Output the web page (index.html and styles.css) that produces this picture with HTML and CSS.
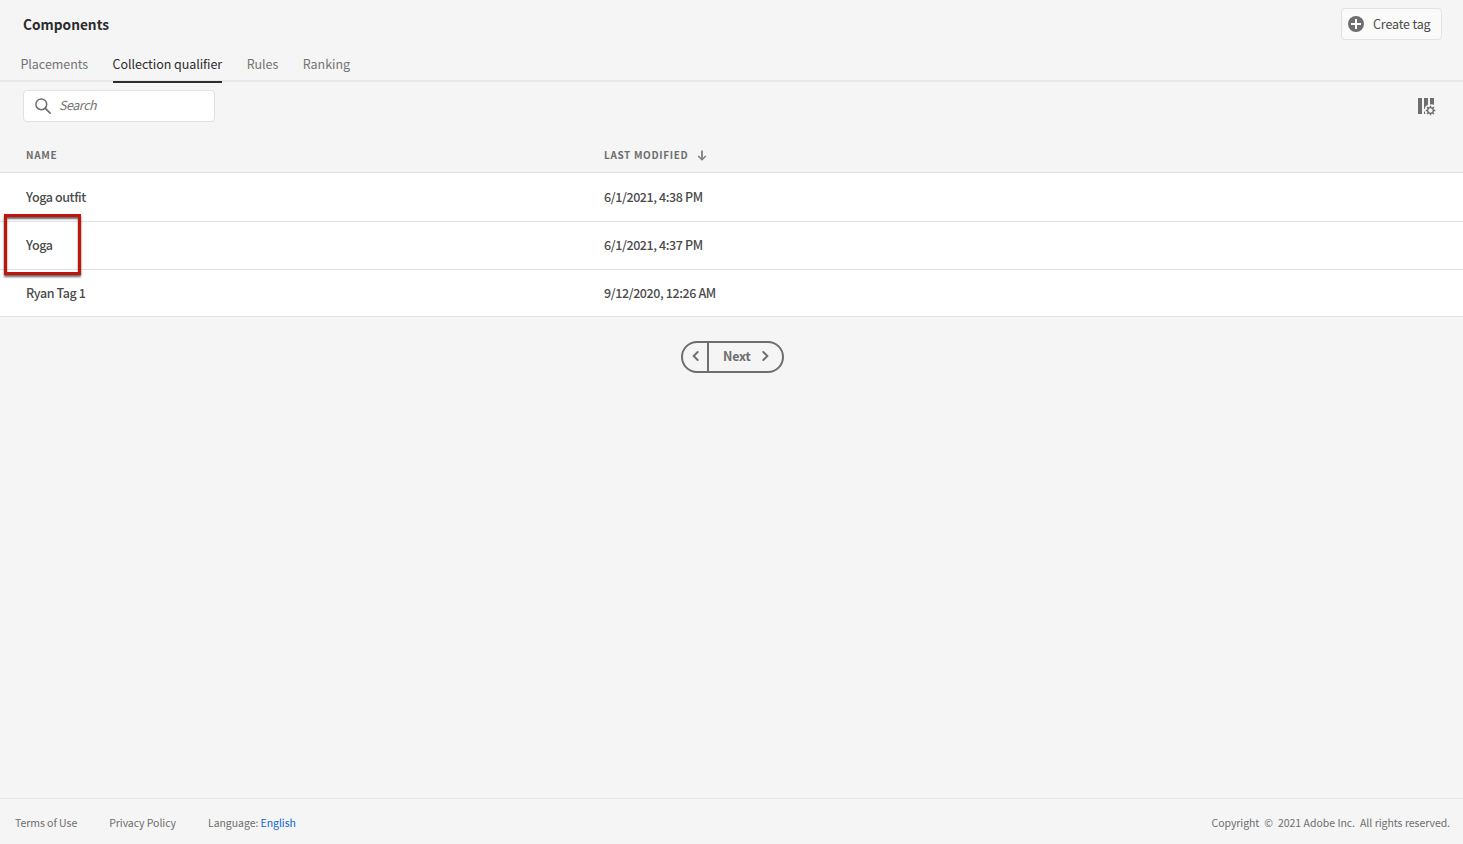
FILE: index.html
```
<!DOCTYPE html>
<html lang="en">
<head>
<meta charset="utf-8">
<title>Components</title>
<link rel="stylesheet" href="styles.css">
</head>
<body>

<header class="header">
	<h1 class="title">Components</h1>
	<button class="create">
		<svg width="16" height="16" viewBox="0 0 16 16"><circle cx="8" cy="8" r="8" fill="#6e6e6e"/><path d="M8 3v10M3 8h10" stroke="#fafafa" stroke-width="2"/></svg>
		<span>Create tag</span>
	</button>
</header>

<nav class="tabs">
	<a class="tab">Placements</a>
	<a class="tab selected">Collection qualifier</a>
	<a class="tab">Rules</a>
	<a class="tab">Ranking</a>
</nav>

<div class="toolbar">
	<div class="search">
		<svg width="16" height="16" viewBox="0 0 16 16" fill="none" stroke="#6e6e6e"><circle cx="6.3" cy="6.3" r="5.4" stroke-width="1.5"/><path d="M10.3 10.3l4.8 4.9" stroke-width="1.7" stroke-linecap="round"/></svg>
		<span class="search-label">Search</span>
	</div>
	<svg class="columns" width="18" height="18" viewBox="0 0 18 18" fill="#6e6e6e">
		<path d="M0 0h4v16H0zM6 0h4v6.6L7.5 8.5 6.6 11H6zM12 0h4v7l-2-.8-2 .2zM6 13.5h.8l.6 2.5H6z"/>
		<circle cx="12.5" cy="12.5" r="2.8" fill="none" stroke="#6e6e6e" stroke-width="1.3"/>
		<path d="M12.5 7.7v2M12.5 15.3v2M7.7 12.5h2M15.3 12.5h2M9.1 9.1l1.4 1.4M14.5 14.5l1.4 1.4M9.1 15.9l1.4-1.4M14.5 10.5l1.4-1.4" fill="none" stroke="#6e6e6e" stroke-width="1.4"/>
	</svg>
</div>

<main class="table">
	<div class="row head">
		<span>NAME</span>
		<span class="sorted"><span>LAST MODIFIED</span>
			<svg width="10" height="11" viewBox="0 0 10 11" fill="none" stroke="#808080"><path d="M5 .5v9" stroke-width="1.8"/><path d="M1.2 6L5 9.7 8.8 6" stroke-width="1.6"/></svg>
		</span>
	</div>
	<div class="row first"><span>Yoga outfit</span><span>6/1/2021, 4:38 PM</span></div>
	<div class="row marked"><span>Yoga</span><span>6/1/2021, 4:37 PM</span><i class="marker"></i></div>
	<div class="row last"><span>Ryan Tag 1</span><span>9/12/2020, 12:26 AM</span></div>
</main>

<div class="pager">
	<button class="prev"><svg width="7" height="10" viewBox="0 0 7 10"><path d="M5.7 1L1.6 5l4.1 4" fill="none" stroke="#6e6e6e" stroke-width="1.9" stroke-linecap="round"/></svg></button>
	<button class="next"><span>Next</span><svg width="7" height="10" viewBox="0 0 7 10"><path d="M1.3 1l4.1 4-4.1 4" fill="none" stroke="#6e6e6e" stroke-width="1.9" stroke-linecap="round"/></svg></button>
</div>

<footer class="footer">
	<span>Terms of Use</span>
	<span>Privacy Policy</span>
	<span>Language: <a class="english">English</a></span>
	<span class="copyright">Copyright &nbsp;©&nbsp; 2021 Adobe Inc. &nbsp;All rights reserved.</span>
</footer>

</body>
</html>
```
FILE: styles.css
```
* {box-sizing:border-box;}

body {
	margin:0; height:844px; display:flex; flex-direction:column; overflow:hidden;
	background:#f5f5f5; color:#4b4b4b;
	font-family:"Noto Sans CJK SC", "Open Sans", sans-serif; font-size:12.5px; line-height:20px;
}
span, a, h1 {white-space:nowrap;}
svg {display:block; flex:none;}
button {font:inherit; color:inherit; margin:0; padding:0; background:none; border:0;}

/* header */
.header {height:48px; display:flex; justify-content:space-between; align-items:center; padding:0 21px 0 23px;}
.title {margin:0; font-size:13.7px; font-weight:bold; color:#2c2c2c;}
.create {
	width:101px; height:32px; display:flex; align-items:center; gap:9px; padding-left:6px;
	background:#fafafa; border:1px solid #e1e1e1; border-radius:4px; letter-spacing:-.15px;
}

/* tabs */
.tabs {height:34px; display:flex; gap:24.5px; padding-left:20.5px; background:linear-gradient(#e8e8e8, #e8e8e8) 0 32px / 100% 2px no-repeat;}
.tab {height:35px; padding-top:6px; color:#747474; letter-spacing:-.05px;}
.tab.selected {color:#2c2c2c; border-bottom:2px solid #2c2c2c;}

/* search and column settings */
.toolbar {height:56px; display:flex; justify-content:space-between; padding:8px 27px 0 23px;}
.search {
	width:192px; height:32px; display:flex; align-items:center; gap:8px; padding-left:11px;
	background:#fff; border:1px solid #e1e1e1; border-radius:4px; color:#747474; font-style:italic;
}
.search-label {margin-bottom:2px; letter-spacing:-.45px;}
.columns {margin-top:8px;}

/* table */
.row {
	height:48px; display:grid; grid-template-columns:578px 1fr; align-items:center; padding:0 0 1px 26px;
	background:#fff; border-bottom:1px solid #e1e1e1; font-weight:500; letter-spacing:-.4px;
}
.row.head {height:35px; padding-bottom:0; background:none; color:#6e6e6e; font-size:10px; font-weight:bold; letter-spacing:.65px;}
.row.first {height:49px; padding-bottom:0;}
.row.last {height:47px; padding-bottom:0;}
.row.marked {position:relative;}
.sorted {display:flex; align-items:center; gap:9px;}
.marker {
	position:absolute; left:4px; top:-8px; width:77px; height:61px; border:3px solid #c0150a;
	box-shadow:0 2px 2px rgba(0,0,0,.6), inset 0 2px 2px rgba(0,0,0,.6);
}

/* pager */
.pager {width:103px; height:32px; margin:24px 0 0 681px; display:flex; border:2px solid #6e6e6e; border-radius:16px; color:#6e6e6e; font-weight:bold;}
.prev {width:26px; border-right:2px solid #6e6e6e; display:flex; align-items:center; padding:0 0 2px 9px;}
.next {display:flex; align-items:center; gap:11px; padding:0 0 2px 14px; letter-spacing:-.2px;}

/* footer */
.footer {height:46px; margin-top:auto; display:flex; align-items:center; gap:32px; padding:2px 13px 0 15px; border-top:1px solid #e6e6e6; color:#6e6e6e; font-size:10.5px; letter-spacing:-.05px;}
.english {color:#0d66d0;}
.copyright {margin-left:auto; word-spacing:.2px;}
```
